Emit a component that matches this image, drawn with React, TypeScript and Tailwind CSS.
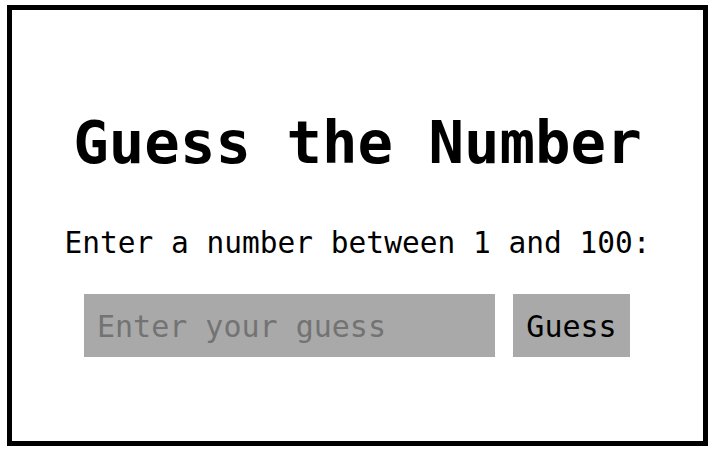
import React, { useState } from "react";

const mono = "font-['DejaVu_Sans_Mono','Liberation_Mono',monospace]";

export default function App(): JSX.Element {
  const [guess, setGuess] = useState("");

  return (
    <div className={`min-h-screen bg-white pt-[5px] pl-[7px] ${mono}`}>
      <div className="w-[701px] h-[441px] border-[5px] border-black flex flex-col items-center pt-[103px]">
        <h1 className="text-[59px] leading-[60px] font-bold text-black">
          Guess the Number
        </h1>
        <p className="mt-[56px] text-[29.5px] leading-[29.5px] text-black">
          Enter a number between 1 and 100:
        </p>
        <div className="mt-[35px] self-start ml-[72px] flex items-center gap-[18px]">
          <input
            type="text"
            value={guess}
            onChange={(e) => setGuess(e.target.value)}
            placeholder="Enter your guess"
            className={`w-[411px] h-[63px] bg-[#a9a9a9] px-[13px] pt-[2px] text-[30px] text-black placeholder:text-[#737373] outline-none ${mono}`}
          />
          <button
            className={`w-[117px] h-[63px] bg-[#a9a9a9] pt-[2px] text-[30px] text-black ${mono}`}
          >
            Guess
          </button>
        </div>
      </div>
    </div>
  );
}
